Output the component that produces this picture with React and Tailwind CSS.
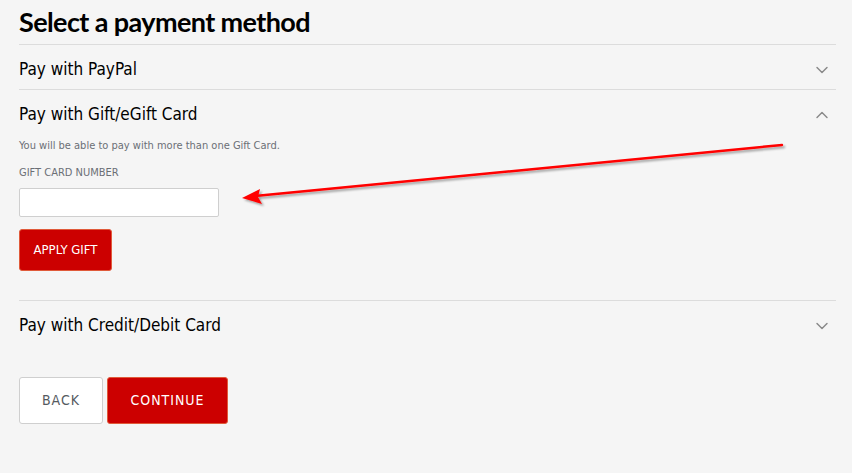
import React from 'react';
import { ChevronDown, ChevronUp } from 'lucide-react';

const font = { fontFamily: '"DejaVu Sans Condensed", "DejaVu Sans", "Liberation Sans", sans-serif' };

const Row = ({ title, open }) => (
  <div className="flex items-center justify-between h-[44px] pt-[6px] pr-[4px]">
    <span className="text-[17px] text-black">{title}</span>
    {open ? (
      <ChevronUp className="w-[20px] h-[20px] text-[#8a8a8a]" strokeWidth={1.75} />
    ) : (
      <ChevronDown className="w-[20px] h-[20px] text-[#8a8a8a]" strokeWidth={1.75} />
    )}
  </div>
);

export default function App() {
  return (
    <div className="relative w-[852px] h-[473px] bg-[#f5f5f5] overflow-hidden" style={font}>
      <div className="pl-[19px] pr-[16px]">
        <h1
          className="text-[27px] font-bold text-black leading-[34px] tracking-[-0.6px] pt-[5px] pb-[5px]"
          style={{ fontFamily: 'Lato, "DejaVu Sans", sans-serif' }}
        >
          Select a payment method
        </h1>

        <div className="border-t border-[#dcdcdc]">
          <Row title="Pay with PayPal" />
        </div>

        <div className="border-t border-[#dcdcdc]">
          <Row title="Pay with Gift/eGift Card" open />
          <div className="pb-[29px]">
            <p className="text-[11px] text-[#6b6f75] mt-[4px]">You will be able to pay with more than one Gift Card.</p>
            <label className="block text-[11px] text-[#6b6f75] mt-[10px]">GIFT CARD NUMBER</label>
            <input className="block mt-[7px] w-[200px] h-[29px] bg-white border border-[#cfcfcf] rounded-[2px]" />
            <button className="mt-[12px] h-[42px] w-[93px] bg-[#cc0000] border border-[#e05a3a] rounded-[3px] text-white text-[13px]">APPLY GIFT</button>
          </div>
        </div>

        <div className="border-t border-[#dcdcdc]">
          <Row title="Pay with Credit/Debit Card" />
        </div>

        <div className="flex gap-[4px] mt-[32px]">
          <button className="w-[84px] h-[47px] bg-white border border-[#cfcfcf] rounded-[3px] text-[#555a60] text-[14px] tracking-[1px]">BACK</button>
          <button className="w-[121px] h-[47px] bg-[#cc0000] border border-[#e05a3a] rounded-[3px] text-white text-[14px] tracking-[1px]">CONTINUE</button>
        </div>
      </div>

      <svg className="absolute left-0 top-0 pointer-events-none" width="852" height="473">
        <defs>
          <filter id="sh" x="-10%" y="-50%" width="120%" height="200%">
            <feDropShadow dx="2" dy="2" stdDeviation="1.2" floodColor="#000" floodOpacity="0.35" />
          </filter>
        </defs>
        <g filter="url(#sh)">
          <line x1="782" y1="145" x2="255" y2="196" stroke="#ff0000" strokeWidth="2.5" strokeLinecap="round" />
          <polygon points="242,198 260,189 258,197 262,204" fill="#ff0000" />
        </g>
      </svg>
    </div>
  );
}
